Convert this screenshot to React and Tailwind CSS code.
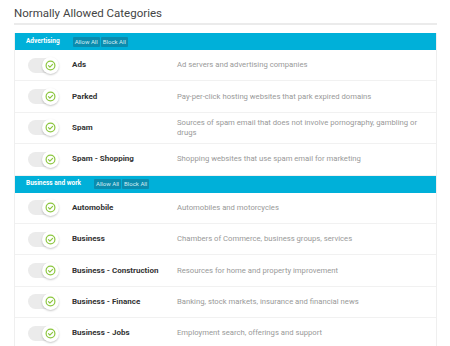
import React from 'react'

const sections = [
  {
    title: 'Advertising',
    rows: [
      ['Ads', 'Ad servers and advertising companies'],
      ['Parked', 'Pay-per-click hosting websites that park expired domains'],
      ['Spam', 'Sources of spam email that does not involve pornography, gambling or drugs'],
      ['Spam - Shopping', 'Shopping websites that use spam email for marketing'],
    ],
  },
  {
    title: 'Business and work',
    rows: [
      ['Automobile', 'Automobiles and motorcycles'],
      ['Business', 'Chambers of Commerce, business groups, services'],
      ['Business - Construction', 'Resources for home and property improvement'],
      ['Business - Finance', 'Banking, stock markets, insurance and financial news'],
      ['Business - Jobs', 'Employment search, offerings and support'],
    ],
  },
]

function Toggle() {
  return (
    <div className="relative w-[30px] h-[15px] rounded-full bg-[#ebebeb]">
      <div className="absolute right-[-1px] top-[-1px] w-[17px] h-[17px] rounded-full bg-white shadow-[0_1px_2px_rgba(0,0,0,0.22)] flex items-center justify-center">
        <svg width="11" height="11" viewBox="0 0 12 12" fill="none">
          <circle cx="6" cy="6" r="4.8" stroke="#8cc63f" strokeWidth="1.3" />
          <path d="M3.8 6.2l1.5 1.5 3-3" stroke="#8cc63f" strokeWidth="1.3" strokeLinecap="round" strokeLinejoin="round" />
        </svg>
      </div>
    </div>
  )
}

function Section({ title, rows }) {
  return (
    <div>
      <div className="h-[17px] bg-[#00b0d9] flex items-center pl-[11px]">
        <span className="text-[6.5px] font-bold text-white whitespace-nowrap">{title}</span>
        <div className="flex gap-[1px] ml-[13px]">
          <span className="h-[10px] px-[2px] bg-[#0b8cae] rounded-[1px] text-[6px] leading-[10px] text-[#d4eef5]">Allow All</span>
          <span className="h-[10px] px-[2px] bg-[#0b8cae] rounded-[1px] text-[6px] leading-[10px] text-[#d4eef5]">Block All</span>
        </div>
      </div>
      {rows.map(([name, desc]) => (
        <div key={name} className="h-[31.4px] border-b border-[#f1f1f1] flex items-center">
          <div className="w-[57px] pl-[13px]">
            <Toggle />
          </div>
          <div className="w-[105px] text-[8px] font-bold text-[#333]">{name}</div>
          <div className="flex-1 pr-[12px] text-[7.7px] leading-[10px] text-[#999]">{desc}</div>
        </div>
      ))}
    </div>
  )
}

export default function App() {
  return (
    <div className="w-[450px] h-[346px] bg-white overflow-hidden font-['Roboto',sans-serif]">
      <div className="pl-[14px] pr-[13px] pt-[7px]">
        <h2 className="text-[11.5px] leading-[13px] text-[#444]">Normally Allowed Categories</h2>
        <div className="h-[2px] bg-[#ebebeb] mt-[3px]" />
        <div className="mt-[8px] border-x border-[#efefef]">
          {sections.map((s) => (
            <Section key={s.title} {...s} />
          ))}
        </div>
      </div>
    </div>
  )
}
